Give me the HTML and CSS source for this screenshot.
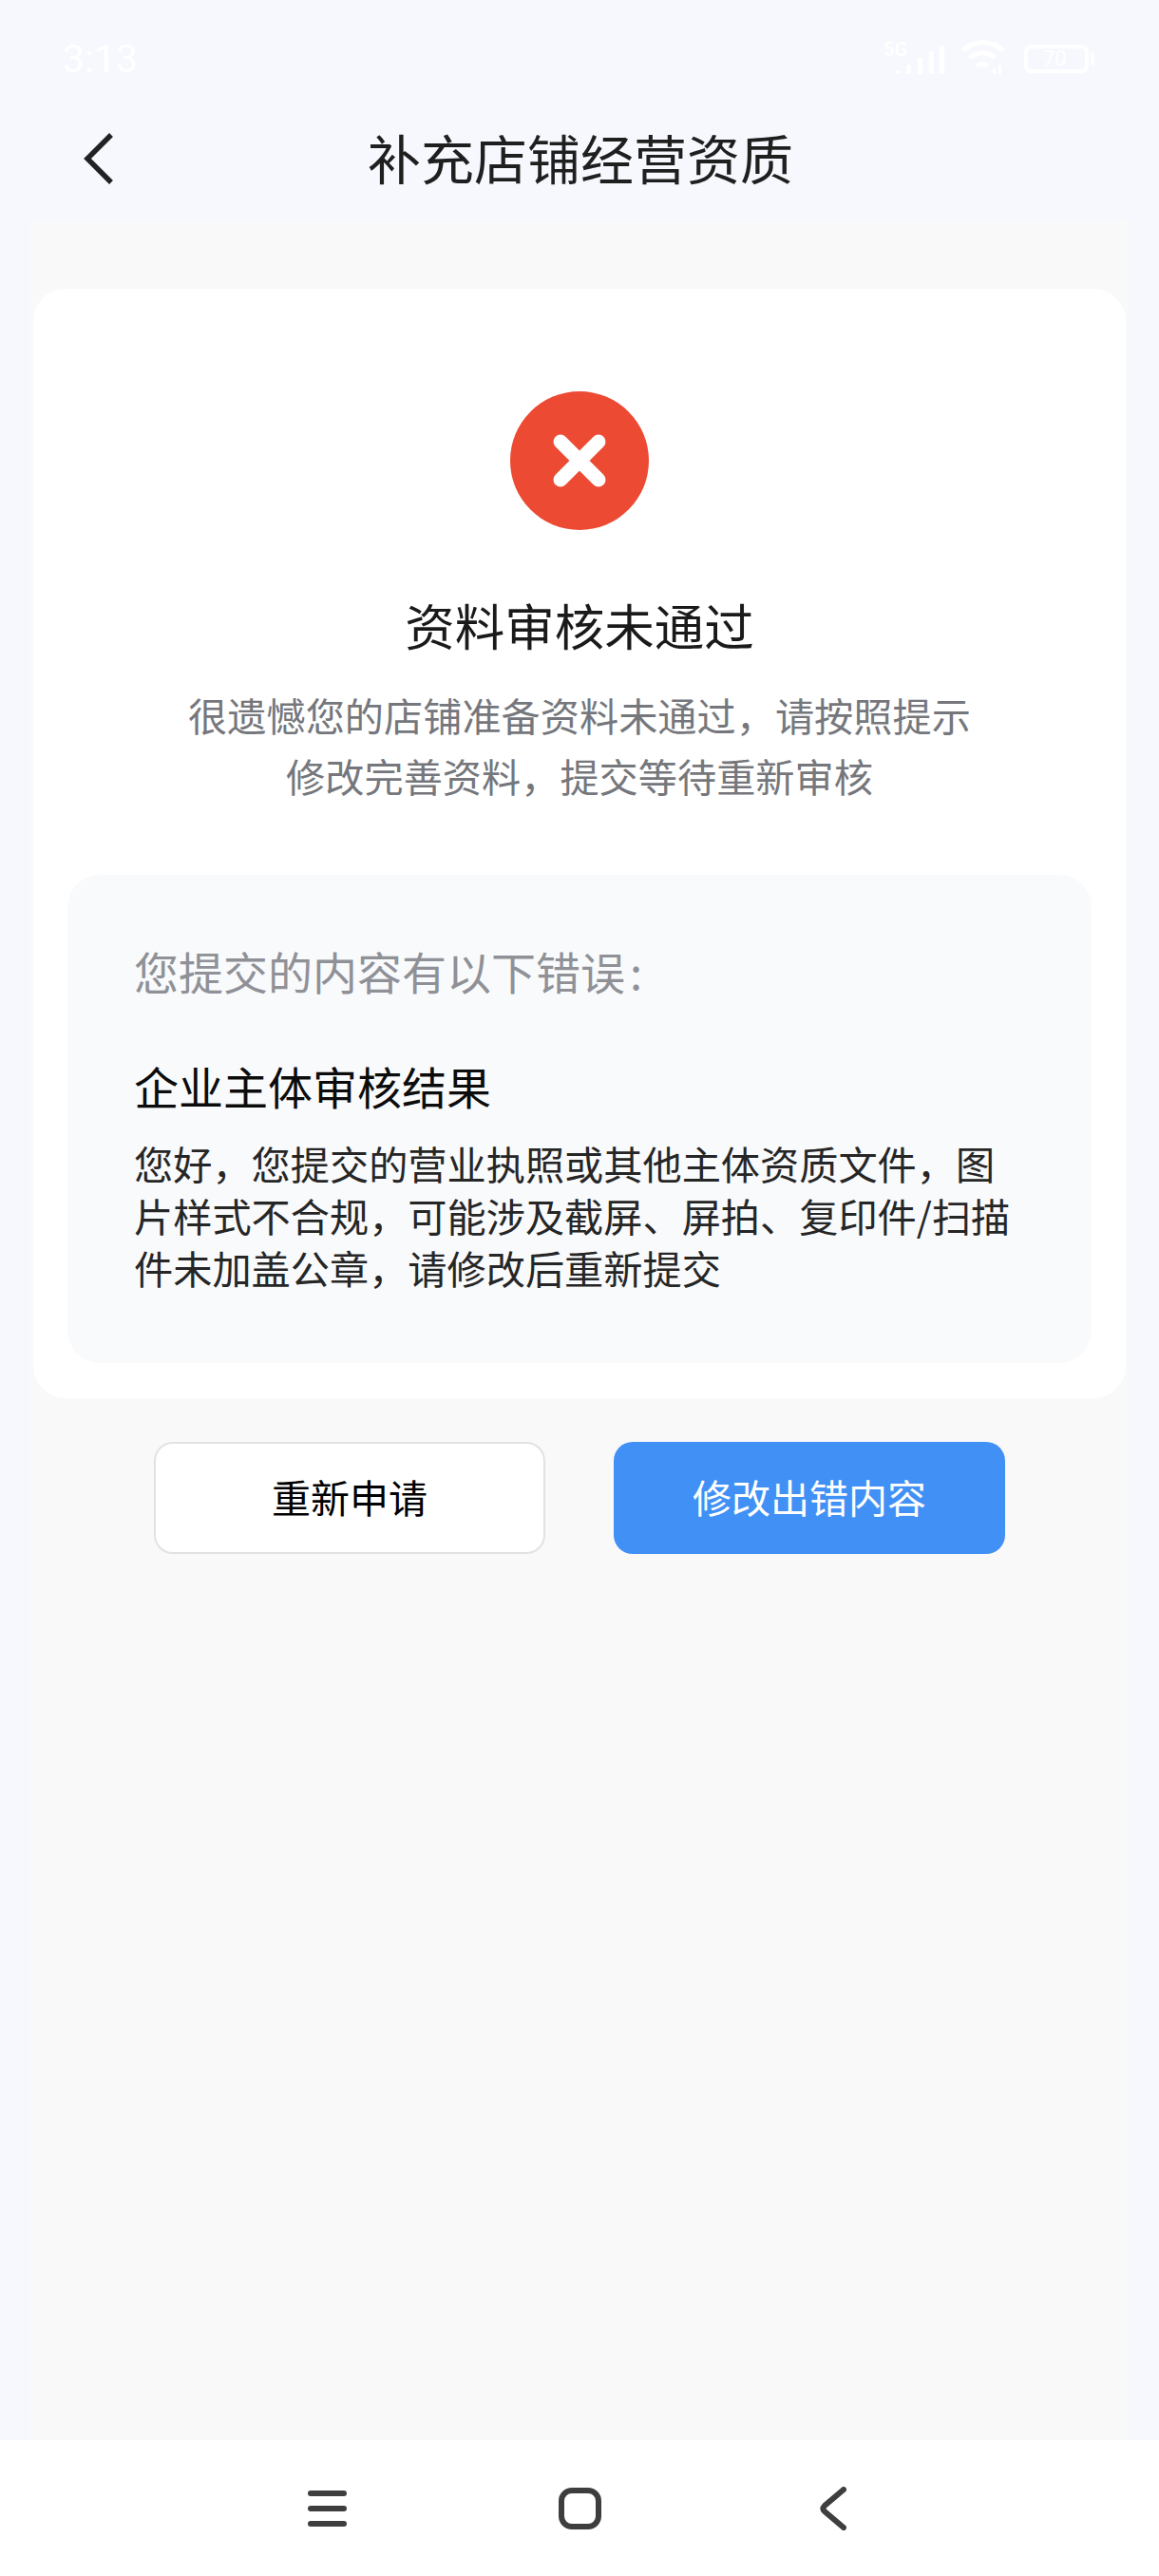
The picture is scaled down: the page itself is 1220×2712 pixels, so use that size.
FILE: index.html
```html
<!DOCTYPE html>
<html lang="zh-CN">
<head>
  <meta charset="UTF-8" />
  <title>补充店铺经营资质</title>
  <link rel="stylesheet" href="styles.css">
</head>
<body>
  <div class="screen">
    <div class="status-bar">
      <span class="time">3:13</span>
      <div class="status-icons">
        <div class="signal">
          <span class="net">5G</span>
          <svg width="52" height="30" viewBox="0 0 52 30">
            <rect x="0" y="26" width="5" height="4" rx="1" />
            <rect x="12" y="20" width="5" height="10" rx="1" />
            <rect x="24" y="13" width="5" height="17" rx="1" />
            <rect x="36" y="6" width="5" height="24" rx="1" />
            <rect x="47" y="0" width="5" height="30" rx="1" />
          </svg>
        </div>
        <svg class="wifi" width="46" height="36" viewBox="0 0 46 36" fill="none">
          <path d="M2 11 C13 0 33 0 44 11" />
          <path d="M9 19 C16 12 28 12 35 19" />
          <path d="M16 28 C19 25 25 25 28 28" />
          <rect class="dot" x="33" y="30" width="3" height="6" />
          <rect class="dot" x="39" y="27" width="3" height="9" />
        </svg>
        <div class="battery"><span class="level">70</span></div>
        <span class="battery-tip"></span>
      </div>
    </div>

    <header class="nav">
      <svg class="back" width="32" height="54" viewBox="0 0 32 54" fill="none">
        <path d="M29 2 L4 27 L29 52" />
      </svg>
      <h1>补充店铺经营资质</h1>
    </header>

    <main class="content">
      <section class="card">
        <div class="fail-icon">
          <svg width="56" height="56" viewBox="0 0 56 56">
            <path d="M8 8 L48 48 M48 8 L8 48" />
          </svg>
        </div>
        <h2>资料审核未通过</h2>
        <p class="desc">很遗憾您的店铺准备资料未通过，请按照提示<br>修改完善资料，提交等待重新审核</p>

        <div class="errors">
          <p class="errors-head">您提交的内容有以下错误<span class="colon">:</span></p>
          <h3>企业主体审核结果</h3>
          <p class="errors-text">您好，您提交的营业执照或其他主体资质文件，图片样式不合规，可能涉及截屏、屏拍、复印件/扫描件未加盖公章，请修改后重新提交</p>
        </div>
      </section>

      <div class="actions">
        <button class="btn btn-plain">重新申请</button>
        <button class="btn btn-primary">修改出错内容</button>
      </div>
    </main>

    <footer class="nav-bar">
      <svg class="nav-menu" width="41" height="38" viewBox="0 0 41 38" fill="none">
        <path d="M3 3 H38 M3 19 H38 M3 35 H38" />
      </svg>
      <svg class="nav-home" width="45" height="44" viewBox="0 0 45 44" fill="none">
        <rect x="3" y="3" width="39" height="38" rx="11" />
      </svg>
      <svg class="nav-back" width="28" height="46" viewBox="0 0 28 46" fill="none">
        <path d="M25 3 L5 20 Q2 23 5 26 L25 43" />
      </svg>
    </footer>
  </div>
</body>
</html>
```

FILE: styles.css
```css
* { box-sizing: border-box; }

body {
  margin: 0;
  font-family: "Noto Sans CJK SC", "Noto Sans", sans-serif;
  color: #1f1f1f;
  background: #f6f8fd;
}

.screen {
  width: 1220px;
  height: 2712px;
  display: flex;
  flex-direction: column;
}

.status-bar {
  height: 88px;
  padding: 40px 68px 0 66px;
  display: flex;
  justify-content: space-between;
  align-items: flex-start;
  color: #ffffff;
}

.time {
  font-family: "Roboto", sans-serif;
  font-size: 41px;
  line-height: 44px;
}

.status-icons {
  display: flex;
  align-items: flex-start;
  gap: 18px;
  padding-top: 2px;
}

.signal {
  position: relative;
  width: 64px;
  height: 36px;
  padding: 6px 0 0 12px;
}

.signal svg { fill: #ffffff; display: block; }

.net {
  position: absolute;
  top: 0;
  left: 0;
  font-family: "Roboto", sans-serif;
  font-size: 20px;
  font-weight: 700;
  line-height: 20px;
}

.wifi path { stroke: #ffffff; stroke-width: 5; }
.wifi .dot { fill: #ffffff; }

.battery {
  width: 68px;
  height: 30px;
  margin: 5px 0 0 2px;
  border: 4px solid #ffffff;
  border-radius: 8px;
  padding-left: 16px;
}

.level {
  display: block;
  font-family: "Roboto", sans-serif;
  font-size: 22px;
  line-height: 22px;
}

.battery-tip {
  width: 4px;
  height: 14px;
  margin: 13px 0 0 -16px;
  background: #ffffff;
  border-radius: 2px;
}

.nav {
  height: 144px;
  padding: 14px 0 0 88px;
  display: flex;
  align-items: center;
}

.back path {
  stroke: #222222;
  stroke-width: 5.5;
}

.nav h1 {
  margin: -4px 0 0 267px;
  font-size: 56px;
  font-weight: 400;
  line-height: 76px;
  color: #1f1f1f;
}

.content {
  flex: 1;
  margin: 0 32px;
  padding: 72px 3px 0;
  background: #f9f9f9;
}

.card {
  background: #ffffff;
  border-radius: 34px;
  padding: 108px 36px 37px;
  display: flex;
  flex-direction: column;
  align-items: center;
}

.fail-icon {
  width: 146px;
  height: 146px;
  border-radius: 50%;
  background: #ec4a33;
  display: flex;
  align-items: center;
  justify-content: center;
}

.fail-icon path {
  stroke: #ffffff;
  stroke-width: 15;
  stroke-linecap: round;
}

.card h2 {
  margin: 63px 0 1px;
  font-size: 52.5px;
  font-weight: 400;
  line-height: 72px;
  color: #1a1a1a;
}

.desc {
  margin: 26px 0 0;
  font-size: 41.2px;
  line-height: 64px;
  text-align: center;
  color: #75777c;
}

.errors {
  width: 100%;
  margin-top: 73px;
  height: 514px;
  padding: 73px 70px 0;
  background: #f9fafc;
  border-radius: 34px;
}

.errors-head {
  margin: 0;
  font-size: 47px;
  line-height: 56px;
  color: #8f9197;
}

.colon { margin-left: 5px; }

.errors h3 {
  margin: 62px 0 0;
  font-size: 47px;
  font-weight: 400;
  line-height: 62px;
  color: #0c0c0c;
}

.errors-text {
  margin: 23px 0 0;
  font-size: 41.2px;
  line-height: 55px;
  color: #262626;
}

.actions {
  margin-top: 46px;
  display: flex;
  justify-content: center;
  gap: 72px;
}

.btn {
  width: 412px;
  height: 118px;
  padding: 0 0 4px;
  border-radius: 20px;
  font-family: inherit;
  font-size: 41px;
}

.btn-plain {
  background: #ffffff;
  border: 2px solid #e2e2e2;
  color: #000000;
}

.btn-primary {
  background: #4190f6;
  border: none;
  color: #ffffff;
}

.nav-bar {
  height: 143px;
  background: #ffffff;
  padding-left: 324px;
  display: flex;
  align-items: center;
}

.nav-bar svg { stroke: #3e3e3e; stroke-width: 6; stroke-linecap: round; }
.nav-home { margin-left: 223px; }
.nav-back { margin-left: 230px; }
```
